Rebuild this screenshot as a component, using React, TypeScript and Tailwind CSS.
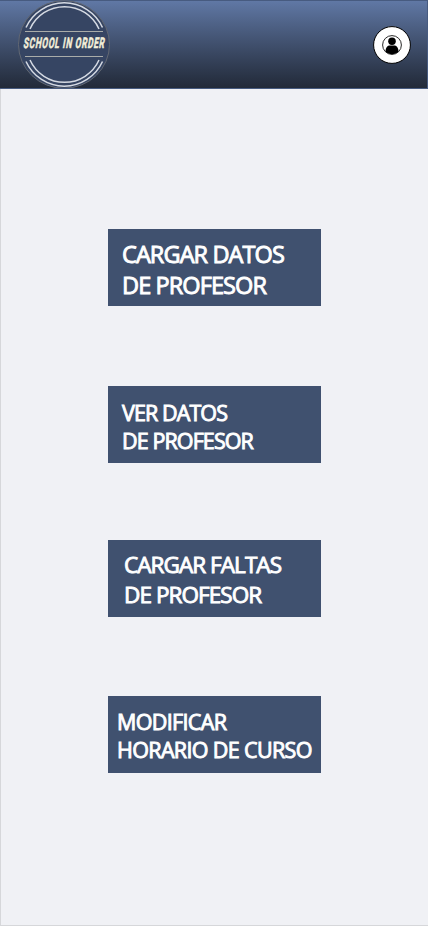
type Action = { lines: [string, string]; box: string };

const actions: Action[] = [
  { lines: ['CARGAR DATOS', 'DE PROFESOR'], box: 'pt-[10px] pl-[14px] text-[23.5px] leading-[31px] tracking-[-0.9px]' },
  { lines: ['VER DATOS', 'DE PROFESOR'], box: 'mt-20 pt-[13px] pl-[14px] text-[21.5px] leading-[28px] tracking-[-0.9px]' },
  { lines: ['CARGAR FALTAS', 'DE PROFESOR'], box: 'mt-[77px] pt-[10px] pl-[16px] text-[22.5px] leading-[30px] tracking-[-0.93px]' },
  { lines: ['MODIFICAR', 'HORARIO DE CURSO'], box: 'mt-[79px] pt-[12px] pl-[9px] text-[21.5px] leading-[28px] tracking-[-0.65px]' },
];

function Logo() {
  return (
    <svg className="ml-[17px] h-[88px] w-[94px] shrink-0" viewBox="17 0 94 88" fill="none" role="img" aria-label="School in order">
      <ellipse cx="64" cy="44.5" rx="45.5" ry="43.8" fill="#364563" stroke="#626873" strokeWidth="1" />
      <g stroke="#d5dae3" strokeWidth="1.5">
        <path d="M26 27.5A42 42 0 0 1 102.5 27.5" />
        <path d="M30 29A37.8 37.8 0 0 1 99 29" />
        <path d="M26 61.5A42 42 0 0 0 102.5 61.5" />
        <path d="M30 60A37.8 37.8 0 0 0 99 60" />
      </g>
      <path d="M25 31.5H103M25 56.5H103" stroke="#a9aca9" strokeWidth="1" />
      <text transform="translate(23 48) skewX(-10) scale(.57 1)" fill="#f3efda" stroke="#f3efda" strokeWidth=".5" fontSize="14.6" fontWeight="700" textLength="142" lengthAdjust="spacing" className="font-['Roboto',sans-serif]">SCHOOL IN ORDER</text>
    </svg>
  );
}

export default function App() {
  return (
    <div className="flex h-[926px] w-[428px] flex-col overflow-hidden bg-[#f0f1f5] font-['Open_Sans','Noto_Sans',sans-serif]">
      <header className="flex h-[89px] shrink-0 items-start justify-between border border-l-0 border-[#475b80] bg-linear-to-b from-[#6078a5] to-[#222a39] bg-no-repeat">
        <div className="-mt-px"><Logo /></div>
        <button aria-label="Perfil" className="mt-[25px] mr-4 size-[38px]">
          <svg viewBox="0 0 38 38" className="size-full" fill="none">
            <circle cx="19" cy="19" r="18.4" fill="white" stroke="black" />
            <circle cx="19" cy="19" r="9.4" stroke="#111" strokeWidth=".9" />
            <ellipse cx="19" cy="15.3" rx="3.8" ry="3.7" fill="black" />
            <path d="M12.5 25.5C12.7 21.5 14.5 19.6 17 19.6H21C23.5 19.6 25.3 21.5 25.5 25.5C22 29 16 29 12.5 25.5Z" fill="black" />
          </svg>
        </button>
      </header>
      <main className="flex flex-1 flex-col items-start border-b border-l border-[#d6d7da] pt-[140px] pl-[107px]">
        {actions.map(({ lines, box }) => (
          <button key={lines.join(' ')} className={`flex h-[77px] w-[213px] shrink-0 flex-col items-start bg-[#40516f] text-left font-normal whitespace-nowrap text-white [-webkit-text-stroke:0.9px_white] ${box}`}>
            <span>{lines[0]}</span>
            <span>{lines[1]}</span>
          </button>
        ))}
      </main>
    </div>
  );
}
